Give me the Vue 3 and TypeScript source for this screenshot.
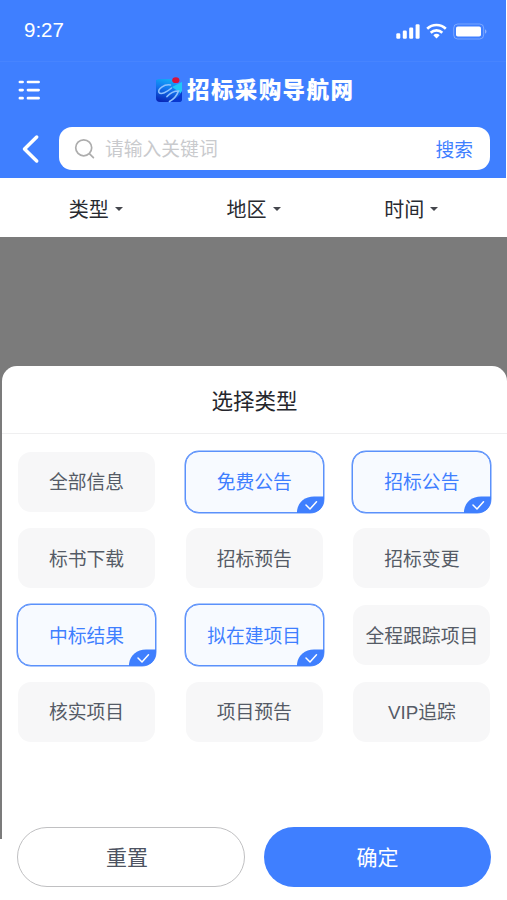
<script setup lang="ts">
import { ref } from 'vue'

interface Option {
  label: string
  selected: boolean
}

const filters: string[] = ['类型', '地区', '时间']
const keyword = ref('')

const initial: Option[] = [
  { label: '全部信息', selected: false },
  { label: '免费公告', selected: true },
  { label: '招标公告', selected: true },
  { label: '标书下载', selected: false },
  { label: '招标预告', selected: false },
  { label: '招标变更', selected: false },
  { label: '中标结果', selected: true },
  { label: '拟在建项目', selected: true },
  { label: '全程跟踪项目', selected: false },
  { label: '核实项目', selected: false },
  { label: '项目预告', selected: false },
  { label: 'VIP追踪', selected: false },
]
const options = ref<Option[]>(initial)

function toggle(option: Option): void {
  option.selected = !option.selected
}

function reset(): void {
  options.value.forEach((o) => (o.selected = false))
}
</script>

<template>
  <div class="screen">
    <header class="header">
      <div class="status">
        <span class="time">9:27</span>
        <svg class="status-icons" width="92" height="20" viewBox="0 0 92 20">
          <g fill="#fff">
            <rect x="1.3" y="12.2" width="4" height="5.6" rx="1.2" />
            <rect x="7.8" y="9.6" width="4" height="8.2" rx="1.2" />
            <rect x="14.2" y="6.5" width="4" height="11.3" rx="1.2" />
            <rect x="20.6" y="3.2" width="4" height="14.6" rx="1.2" />
          </g>
          <g fill="none" stroke="#fff" stroke-width="2.6">
            <path d="M32.2 7.8a13.4 13.4 0 0 1 18.6 0" />
            <path d="M35.7 11.7a8.3 8.3 0 0 1 11.6 0" />
          </g>
          <path d="M38.3 14.2a4.7 4.7 0 0 1 6.4 0L41.5 17.5z" fill="#fff" />
          <rect x="58.7" y="3" width="30" height="15" rx="4" fill="none" stroke="#fff" stroke-opacity=".3" />
          <rect x="61" y="5.5" width="25" height="10" rx="1.8" fill="#fff" />
          <path d="M90 8.3c2 .8 2 3.6 0 4.4z" fill="#fff" fill-opacity=".4" />
        </svg>
      </div>

      <div class="brand-bar">
        <svg class="menu" width="24" height="22" viewBox="0 0 24 22" stroke="#fff" stroke-width="2.7" stroke-linecap="round">
          <path d="M1.9 2h2.7M10 2h10.6M1.9 10.1h2.7M10 10.1h10.6M1.9 18.2h2.7M10 18.2h10.6" />
        </svg>
        <div class="brand">
          <svg width="28" height="26" viewBox="0 0 28 26">
            <defs>
              <linearGradient id="mark" x1="0.6" y1="0" x2="0.3" y2="1">
                <stop offset="0" stop-color="#12aef8" />
                <stop offset=".45" stop-color="#1274ee" />
                <stop offset="1" stop-color="#0828b8" />
              </linearGradient>
            </defs>
            <path d="M4 2h12l6 6 5-3v17q0 3-3 3H5q-4 0-4-4V3z" fill="url(#mark)" />
            <path d="M17 10l10-5v12z" fill="#20c8f8" />
            <path d="M14 25q10-3 13-11v8q0 3-3 3z" fill="#0838d0" />
            <path d="M15.500 8C9 7 2.500 12 4 15.500C6 18 12 15 16.500 11" fill="none" stroke="#8fc2ff" stroke-width="1.500" stroke-linecap="round" />
            <path d="M12 19.500Q17 14 23.500 14Q21 21 14.500 24.500" fill="none" stroke="#8fc2ff" stroke-width="1.700" stroke-linecap="round" />
            <ellipse cx="20.800" cy="3.200" rx="3.600" ry="2.900" fill="#d7133c" />
          </svg>
          <span class="brand-name">招标采购导航网</span>
        </div>
      </div>

      <div class="search-bar">
        <svg class="back" width="20" height="30" viewBox="0 0 20 30" fill="none" stroke="#fff" stroke-width="3.5" stroke-linecap="round" stroke-linejoin="round">
          <path d="M15.7 3L3.5 15l12.2 12" />
        </svg>
        <div class="search-box">
          <svg width="22" height="22" viewBox="0 0 22 22" fill="none" stroke="#adadad" stroke-width="1.7" stroke-linecap="round">
            <circle cx="9.7" cy="9.8" r="8" />
            <path d="M15.6 15.8l3.8 3.9" />
          </svg>
          <input v-model="keyword" class="search-input" placeholder="请输入关键词" />
          <span class="search-action">搜索</span>
        </div>
      </div>
    </header>

    <nav class="filters">
      <div v-for="name in filters" :key="name" class="filter">
        <span>{{ name }}</span>
        <i class="caret"></i>
      </div>
    </nav>

    <main class="overlay">
      <section class="sheet">
        <h2 class="sheet-title">选择类型</h2>
        <div class="options">
          <button
            v-for="option in options"
            :key="option.label"
            class="option"
            :class="{ selected: option.selected }"
            @click="toggle(option)"
          >
            {{ option.label }}
            <svg v-if="option.selected" class="check" width="27" height="17" viewBox="0 0 27 17">
              <path d="M0 17v-2C1 6 8 .5 17 .5h10V4c0 8-5 13-13 13z" fill="#3f7ffe" />
              <path d="M9 9l4 4L19.5 5.8" fill="none" stroke="#fff" stroke-width="1.5" stroke-linecap="round" stroke-linejoin="round" />
            </svg>
          </button>
        </div>
        <div class="actions">
          <button class="action reset" @click="reset">重置</button>
          <button class="action primary">确定</button>
        </div>
      </section>
    </main>
  </div>
</template>

<style>
body {
  background: #fff;
}
</style>

<style scoped>
* {
  box-sizing: border-box;
}

.screen {
  display: flex;
  flex-direction: column;
  width: 507px;
  height: 900px;
  overflow: hidden;
  background: #fff;
  font-family: 'Liberation Sans', 'Noto Sans CJK SC', sans-serif;
}

button,
input {
  padding: 0;
  border: 0;
  font-family: inherit;
}

.header {
  width: 506px;
  height: 178px;
  background: #3f7fff;
}

.status {
  display: flex;
  align-items: center;
  justify-content: space-between;
  height: 62px;
  padding: 0 19px 0 24px;
  border-bottom: 1px solid #4784ff;
}

.time {
  padding-bottom: 2px;
  color: #fff;
  font-size: 20.5px;
  line-height: 24px;
}

.brand-bar {
  display: flex;
  align-items: center;
  height: 57px;
  padding-left: 18px;
}

.brand {
  display: flex;
  align-items: center;
  gap: 4px;
  margin-left: 113px;
}

.brand-bar .brand svg {
  margin-top: -1px;
}

.brand-name {
  padding-top: 1px;
  color: #fff;
  font-size: 22.5px;
  font-weight: 900;
  line-height: 28px;
  letter-spacing: 1.4px;
  white-space: nowrap;
}

.search-bar {
  display: flex;
  align-items: center;
  padding: 8px 16px 0 21px;
}

.search-box {
  display: flex;
  align-items: center;
  width: 431px;
  height: 43px;
  margin-left: 18px;
  padding: 0 17px 0 15px;
  border-radius: 13px;
  background: #fff;
}

.search-input {
  flex: 1;
  min-width: 0;
  height: 32px;
  margin-left: 9px;
  padding-top: 3px;
  outline: 0;
  background: transparent;
  font-size: 18.8px;
}

.search-input::placeholder {
  color: #c9cacd;
}

.search-action {
  color: #3f7fff;
  font-size: 18.8px;
}

.filters {
  display: flex;
  height: 59px;
  padding: 0 17px;
  background: #fff;
}

.filter {
  display: flex;
  flex: 1;
  align-items: center;
  justify-content: center;
  gap: 6px;
  padding-top: 2px;
  color: #282a30;
  font-size: 20px;
}

.caret {
  border-top: 4.5px solid #45474d;
  border-right: 4px solid transparent;
  border-left: 4px solid transparent;
}

.overlay {
  flex: 1;
  width: 507px;
  padding: 129px 0 0 2px;
  background: linear-gradient(#7b7b7b 602px, #fff 602px);
}

.sheet {
  height: 534px;
  border-radius: 15px 15px 0 0;
  background: #fff;
}

.sheet-title {
  height: 68px;
  margin: 0;
  border-bottom: 1px solid #efeff0;
  color: #24262c;
  font-size: 21.5px;
  font-weight: 400;
  line-height: 72px;
  text-align: center;
}

.options {
  display: grid;
  grid-template-columns: repeat(3, 139px);
  grid-auto-rows: 62px;
  gap: 14.8px 28.7px;
  padding: 16.5px 0 0 15px;
}

.option {
  position: relative;
  padding-bottom: 2px;
  border: 1px solid transparent;
  border-radius: 14px;
  background: #f7f7f8;
  background-clip: padding-box;
  color: #555b66;
  font-size: 18.8px;
  white-space: nowrap;
}

.option.selected {
  border-color: #5b91fb;
  background: #f7faff;
  box-shadow: 0 0 0 0.5px #5b91fb;
  color: #3f7fff;
}

.check {
  position: absolute;
  right: -1px;
  bottom: -1px;
  border-bottom-right-radius: 13px;
}

.actions {
  display: flex;
  gap: 19px;
  padding: 84px 0 0 15px;
}

.action {
  width: 228px;
  height: 60px;
  padding-bottom: 1px;
  border-radius: 30px;
  font-size: 21px;
}

.action.reset {
  padding-right: 8px;
  border: 1px solid #c0c0c2;
  background: #fff;
  color: #4d5361;
}

.action.primary {
  width: 227px;
  background: #3f7fff;
  color: #fff;
}
</style>
